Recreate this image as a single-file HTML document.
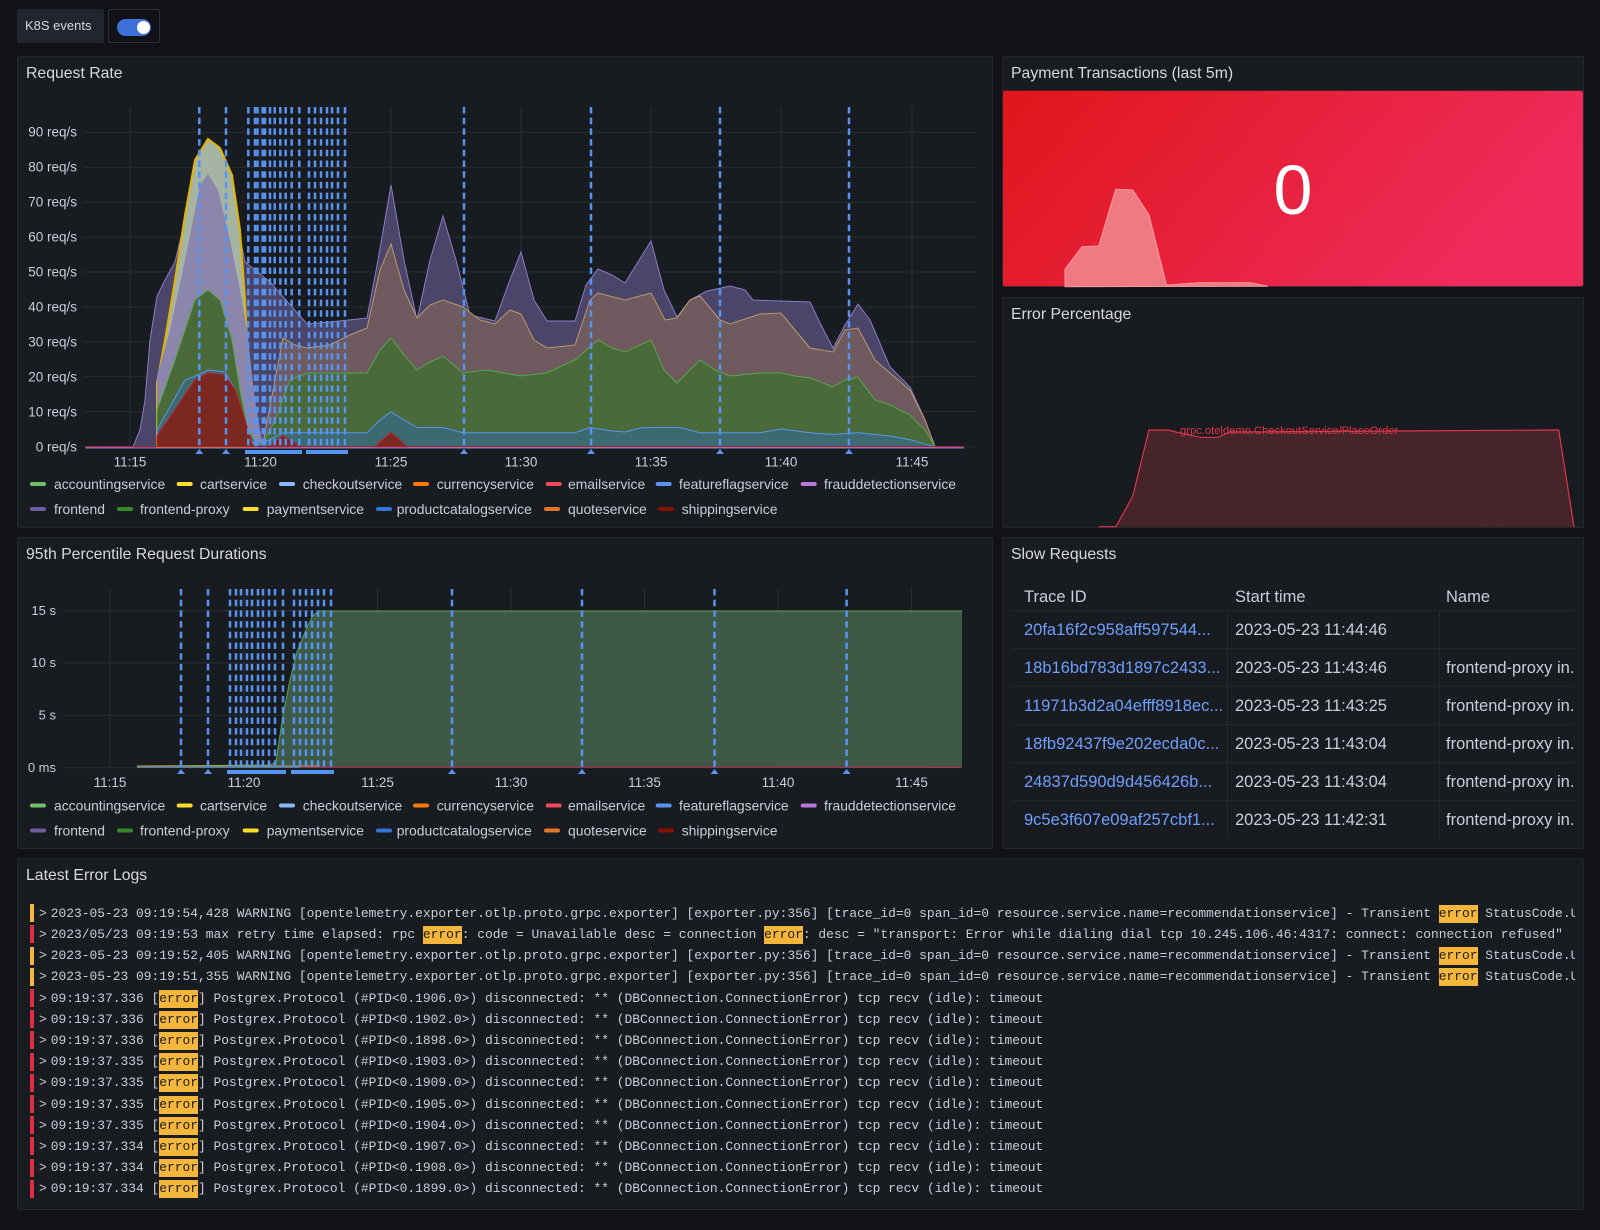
<!DOCTYPE html>
<html><head><meta charset="utf-8">
<style>
*{box-sizing:border-box;margin:0;padding:0}
body{width:1600px;height:1230px;background:#111217;position:relative;overflow:hidden;font-family:"Liberation Sans",sans-serif;color:#ccccdc}
.p{position:absolute;background:#181b1f;border:1px solid #24272e;border-radius:2px}
.t{position:absolute;font-size:15.8px;color:#d8d9e0;white-space:nowrap}
.a{position:absolute;white-space:nowrap}
.th,.td{position:absolute;font-size:16.5px;white-space:nowrap;line-height:18px}
.lk{color:#6e9fff}
.log{position:absolute;left:30px;width:1545px;overflow:hidden;height:21.2px;line-height:21.2px;font-family:"Liberation Mono",monospace;font-size:12.93px;color:#ccccdc;white-space:pre}
.log i{position:absolute;left:0;top:1.6px;width:4px;height:18px}
.log b{font-weight:normal;position:absolute;left:9px}
.log s{text-decoration:none;background:#f5b73b;color:#1b1c20;display:inline-block;line-height:18px}
</style></head><body>
<div class="a" style="left:17px;top:9px;width:87px;height:34px;background:#22252b;border-radius:2px;font-size:13px;line-height:34px;padding-left:8px;color:#d8d9e0">K8S events</div>
<div class="a" style="left:108px;top:9px;width:52px;height:34px;border:1px solid #2c3037;border-radius:2px;background:#111217"></div>
<div class="a" style="left:117px;top:19px;width:34px;height:17px;border-radius:9px;background:#3d71d9"></div>
<div class="a" style="left:137px;top:21px;width:13px;height:13px;border-radius:50%;background:#fff"></div>

<div class="p" style="left:17px;top:56px;width:976px;height:472px"></div>
<div class="p" style="left:1002px;top:56px;width:582px;height:231px"></div>
<div class="p" style="left:1002px;top:297px;width:582px;height:231px"></div>
<div class="p" style="left:17px;top:537px;width:976px;height:312px"></div>
<div class="p" style="left:1002px;top:537px;width:582px;height:312px"></div>
<div class="p" style="left:17px;top:858px;width:1567px;height:352px"></div>

<svg class="a" style="left:0;top:0" width="1600" height="1230" xmlns="http://www.w3.org/2000/svg">
<defs>
<linearGradient id="rg" x1="0" y1="0" x2="1" y2="0.3">
<stop offset="0" stop-color="#e0161a"/><stop offset="1" stop-color="#ee2b5c"/></linearGradient>
</defs>
<rect x="1003" y="90.7" width="580" height="195.5" fill="url(#rg)" rx="2"/>
<polygon points="1065,286.7 1065,269.3 1082,246.7 1098.7,246 1115.6,189.3 1132.8,190 1149,215 1166.5,285 1199,282.7 1250.7,282.7 1268,286.2" fill="#f07a82" stroke="#f59aa0" stroke-width="1"/>
<text x="1293" y="214" font-family="Liberation Sans" font-size="70" fill="#fff" text-anchor="middle">0</text>

<polygon points="1098.7,526.7 1116,526.7 1132.8,496 1149,430 1168,430 1180,433 1201,437.3 1218,437.3 1229.6,432 1558.7,430 1574,527" fill="#45242a"/>
<polyline points="1098.7,526.7 1116,526.7 1132.8,496 1149,430 1168,430 1180,433 1201,437.3 1218,437.3 1229.6,432 1558.7,430 1574,527" fill="none" stroke="#e0354a" stroke-width="1.2"/>
<text x="1180" y="434" font-family="Liberation Sans" font-size="11.2" fill="#e0354a">grpc.oteldemo.CheckoutService/PlaceOrder</text>

<g stroke="#2a2d33" stroke-width="1">
<line x1="83" x2="976" y1="446.7" y2="446.7"/><line x1="83" x2="976" y1="411.8" y2="411.8"/><line x1="83" x2="976" y1="376.8" y2="376.8"/><line x1="83" x2="976" y1="341.9" y2="341.9"/><line x1="83" x2="976" y1="307" y2="307"/><line x1="83" x2="976" y1="272" y2="272"/><line x1="83" x2="976" y1="237.1" y2="237.1"/><line x1="83" x2="976" y1="202.2" y2="202.2"/><line x1="83" x2="976" y1="167.3" y2="167.3"/><line x1="83" x2="976" y1="132.3" y2="132.3"/>
<line x1="130" x2="130" y1="107" y2="447"/><line x1="260.5" x2="260.5" y1="107" y2="447"/><line x1="391" x2="391" y1="107" y2="447"/><line x1="521" x2="521" y1="107" y2="447"/><line x1="651" x2="651" y1="107" y2="447"/><line x1="781" x2="781" y1="107" y2="447"/><line x1="912" x2="912" y1="107" y2="447"/>
</g>
<g font-family="Liberation Sans" font-size="13.5" fill="#ccccdc" text-anchor="end">
<text x="77" y="451.5">0 req/s</text><text x="77" y="416.5">10 req/s</text><text x="77" y="381.5">20 req/s</text><text x="77" y="346.5">30 req/s</text><text x="77" y="311.5">40 req/s</text><text x="77" y="276.5">50 req/s</text><text x="77" y="241.5">60 req/s</text><text x="77" y="206.5">70 req/s</text><text x="77" y="171.5">80 req/s</text><text x="77" y="136.5">90 req/s</text>
</g>
<g font-family="Liberation Sans" font-size="13.5" fill="#ccccdc" text-anchor="middle">
<text x="130" y="466.5">11:15</text><text x="260.5" y="466.5">11:20</text><text x="391" y="466.5">11:25</text><text x="521" y="466.5">11:30</text><text x="651" y="466.5">11:35</text><text x="781" y="466.5">11:40</text><text x="912" y="466.5">11:45</text>
</g>
<polygon points="86,446.7 133,446.7 140,430 145,400 150,340 157,296 165,280 175,262 185,220 195,165 208,139 220,150 232,180 240,237 245,262 270,282 307,324 330,322 367,318 378,260 391,185 404,260 417,320 430,260 443,216 456,260 470,315 495,321 508,285 521,252 534,300 547,321 575,321 586,285 598,269 612,275 625,283 638,262 651,241 664,290 677,317 690,300 707,291 730,286 745,290 753,300 810,302 821,325 833,348 845,325 858,304 870,320 890,367 910,387 925,420 935,446.7 963,446.7 963,448 86,448" fill="#4b4569" stroke="#8a7cc8" stroke-width="1"/>
<polygon points="157,446.7 157,383 165,340 175,280 185,215 195,160 208,139 220,148 232,175 240,230 245,300 250,400 256,446.7" fill="#a6b4a4" stroke="#e0b400" stroke-width="2"/>
<polygon points="157,446.7 157,376 170,330 185,260 200,185 208,174 218,190 230,240 240,290 247,330 255,400 263,446.7" fill="#8c86ad"/>
<polygon points="245,446.7 255,440 263,443 275,380 283,338 295,345 307,348 330,345 350,335 367,328 380,270 391,244 404,290 417,318 430,305 443,300 463,307 480,320 495,324 510,310 521,314 534,340 547,348 575,345 590,300 598,293 625,300 651,293 665,320 677,318 690,300 700,296 720,320 730,324 760,314 781,313 795,330 810,348 833,352 845,330 858,328 875,360 890,373 910,390 925,420 935,446.7" fill="#6f5a60" stroke="#b89a6a" stroke-width="1"/>
<polygon points="157,446.7 157,410 175,360 195,300 208,290 220,300 232,340 240,390 248,430 258,446 263,443 275,420 290,380 307,373 367,373 380,350 391,338 404,355 417,370 430,362 443,356 463,373 487,370 520,376 547,373 575,360 598,340 612,348 625,352 640,345 651,340 664,370 677,383 690,370 700,360 715,370 730,376 760,373 781,373 795,376 810,378 833,387 845,380 858,377 875,400 890,405 910,415 925,430 935,446.7" fill="#4a6a3a" stroke="#56a64b" stroke-width="1"/>
<polygon points="157,446.7 157,430 185,380 200,374 208,370 225,372 235,390 245,430 255,446 263,443 283,432.7 367,432.7 380,420 391,411.8 404,420 417,427.5 443,427.5 463,432.7 575,432.7 590,427.5 612,431 625,432 640,428 651,427.5 680,427.5 700,432.7 760,432.7 781,429 810,432.7 833,434.5 858,432.7 890,436 910,439.7 935,446.7" fill="#3d6a70" stroke="#5794f2" stroke-width="1"/>
<polygon points="157,446.7 157,436 175,410 195,380 208,373 225,375 235,390 245,420 253,446.7" fill="#7a2820" stroke="#c4162a" stroke-width="1"/>
<polygon points="268,446.7 283,436 300,446.7" fill="#7a2820" stroke="#c4162a"/>
<polygon points="375,446.7 391,432.7 407,446.7" fill="#7a2820" stroke="#c4162a"/>
<line x1="86" x2="963" y1="446.5" y2="446.5" stroke="#c4162a" stroke-width="1"/>
<g stroke="#5794f2" stroke-width="2.5" stroke-dasharray="6.5 4.2">
<line x1="199.3" x2="199.3" y1="107" y2="446"/><line x1="226" x2="226" y1="107" y2="446"/><line x1="248.3" x2="248.3" y1="107" y2="446"/><line x1="255" x2="255" y1="107" y2="446"/><line x1="257.5" x2="257.5" y1="107" y2="446"/><line x1="262.7" x2="262.7" y1="107" y2="446"/><line x1="265" x2="265" y1="107" y2="446"/><line x1="270" x2="270" y1="107" y2="446"/><line x1="274.7" x2="274.7" y1="107" y2="446"/><line x1="280.3" x2="280.3" y1="107" y2="446"/><line x1="285.7" x2="285.7" y1="107" y2="446"/><line x1="291.7" x2="291.7" y1="107" y2="446"/><line x1="299.3" x2="299.3" y1="107" y2="446"/><line x1="309" x2="309" y1="107" y2="446"/><line x1="315" x2="315" y1="107" y2="446"/><line x1="321" x2="321" y1="107" y2="446"/><line x1="327" x2="327" y1="107" y2="446"/><line x1="332" x2="332" y1="107" y2="446"/><line x1="338" x2="338" y1="107" y2="446"/><line x1="345" x2="345" y1="107" y2="446"/><line x1="464" x2="464" y1="107" y2="446"/><line x1="591" x2="591" y1="107" y2="446"/><line x1="720" x2="720" y1="107" y2="446"/><line x1="849" x2="849" y1="107" y2="446"/>
</g>
<g fill="#5794f2">
<polygon points="199.3,449 195.3,454 203.3,454"/><polygon points="226,449 222,454 230,454"/><polygon points="464,449 460,454 468,454"/><polygon points="591,449 587,454 595,454"/><polygon points="720,449 716,454 724,454"/><polygon points="849,449 845,454 853,454"/>
<rect x="245" y="450" width="57" height="4"/><rect x="306" y="450" width="42" height="4"/>
</g>

<g stroke="#2a2d33" stroke-width="1">
<line x1="63" x2="962" y1="610.7" y2="610.7"/><line x1="63" x2="962" y1="663" y2="663"/><line x1="63" x2="962" y1="715.3" y2="715.3"/><line x1="63" x2="962" y1="767.7" y2="767.7"/>
<line x1="110" x2="110" y1="589" y2="768"/><line x1="244" x2="244" y1="589" y2="768"/><line x1="377.5" x2="377.5" y1="589" y2="768"/><line x1="511" x2="511" y1="589" y2="768"/><line x1="644.5" x2="644.5" y1="589" y2="768"/><line x1="778" x2="778" y1="589" y2="768"/><line x1="911.5" x2="911.5" y1="589" y2="768"/>
</g>
<g font-family="Liberation Sans" font-size="13" fill="#ccccdc" text-anchor="end">
<text x="56" y="615">15 s</text><text x="56" y="667">10 s</text><text x="56" y="719.5">5 s</text><text x="56" y="772">0 ms</text>
</g>
<g font-family="Liberation Sans" font-size="13.5" fill="#ccccdc" text-anchor="middle">
<text x="110" y="787">11:15</text><text x="244" y="787">11:20</text><text x="377.5" y="787">11:25</text><text x="511" y="787">11:30</text><text x="644.5" y="787">11:35</text><text x="778" y="787">11:40</text><text x="911.5" y="787">11:45</text>
</g>
<polygon points="137,767 137,766 270,765 276,762 283,715 290,680 297,652 305,632 312,617 318,611 962,611 962,767.7" fill="#3e5a47"/>
<polyline points="137,766 270,765 276,762 283,715 290,680 297,652 305,632 312,617 318,611 962,611" fill="none" stroke="#56a64b" stroke-width="1"/>
<line x1="137" x2="962" y1="767.3" y2="767.3" stroke="#5794f2" stroke-width="1"/>
<line x1="137" x2="320" y1="766" y2="766" stroke="#c8a020" stroke-width="1"/>
<line x1="300" x2="962" y1="767" y2="767" stroke="#c4162a" stroke-width="1"/>
<g stroke="#5794f2" stroke-width="2.5" stroke-dasharray="6.5 4.2">
<line x1="181" x2="181" y1="589" y2="767"/><line x1="208" x2="208" y1="589" y2="767"/><line x1="230" x2="230" y1="589" y2="767"/><line x1="236" x2="236" y1="589" y2="767"/><line x1="241" x2="241" y1="589" y2="767"/><line x1="247" x2="247" y1="589" y2="767"/><line x1="252" x2="252" y1="589" y2="767"/><line x1="258" x2="258" y1="589" y2="767"/><line x1="263" x2="263" y1="589" y2="767"/><line x1="269" x2="269" y1="589" y2="767"/><line x1="275" x2="275" y1="589" y2="767"/><line x1="283" x2="283" y1="589" y2="767"/><line x1="294" x2="294" y1="589" y2="767"/><line x1="300" x2="300" y1="589" y2="767"/><line x1="306" x2="306" y1="589" y2="767"/><line x1="312" x2="312" y1="589" y2="767"/><line x1="318" x2="318" y1="589" y2="767"/><line x1="324" x2="324" y1="589" y2="767"/><line x1="331" x2="331" y1="589" y2="767"/><line x1="452" x2="452" y1="589" y2="767"/><line x1="582" x2="582" y1="589" y2="767"/><line x1="714.5" x2="714.5" y1="589" y2="767"/><line x1="846.6" x2="846.6" y1="589" y2="767"/>
</g>
<g fill="#5794f2">
<polygon points="181,769 177,774 185,774"/><polygon points="208,769 204,774 212,774"/><polygon points="452,769 448,774 456,774"/><polygon points="582,769 578,774 586,774"/><polygon points="714.5,769 710.5,774 718.5,774"/><polygon points="846.6,769 842.6,774 850.6,774"/>
<rect x="227" y="770" width="59" height="4"/><rect x="291" y="770" width="43" height="4"/>
</g>

<g font-family="Liberation Sans" font-size="13.9" fill="#ccccdc">
<g id="lg1">
<rect x="30" y="482" width="16" height="4" rx="2" fill="#73bf69"/><text x="54" y="489">accountingservice</text>
<rect x="176.7" y="482" width="16" height="4" rx="2" fill="#fade2a"/><text x="200" y="489">cartservice</text>
<rect x="279" y="482" width="16" height="4" rx="2" fill="#8ab8ff"/><text x="302.7" y="489">checkoutservice</text>
<rect x="413" y="482" width="16" height="4" rx="2" fill="#ff780a"/><text x="436.7" y="489">currencyservice</text>
<rect x="545.7" y="482" width="16" height="4" rx="2" fill="#f2495c"/><text x="568" y="489">emailservice</text>
<rect x="655.7" y="482" width="16" height="4" rx="2" fill="#5794f2"/><text x="679" y="489">featureflagservice</text>
<rect x="800.7" y="482" width="16" height="4" rx="2" fill="#b877d9"/><text x="824" y="489">frauddetectionservice</text>
<rect x="30" y="507" width="16" height="4" rx="2" fill="#705da0"/><text x="54" y="514">frontend</text>
<rect x="117" y="507" width="16" height="4" rx="2" fill="#37872d"/><text x="140" y="514">frontend-proxy</text>
<rect x="242.7" y="507" width="16" height="4" rx="2" fill="#fade2a"/><text x="266.7" y="514">paymentservice</text>
<rect x="376" y="507" width="16" height="4" rx="2" fill="#3274d9"/><text x="396.7" y="514">productcatalogservice</text>
<rect x="544" y="507" width="16" height="4" rx="2" fill="#e0752d"/><text x="568" y="514">quoteservice</text>
<rect x="658" y="507" width="16" height="4" rx="2" fill="#890f02"/><text x="681.7" y="514">shippingservice</text>
</g>
<use href="#lg1" transform="translate(0,321.5)"/>
</g>
</svg>

<div class="t" style="left:26px;top:65px">Request Rate</div>
<div class="t" style="left:1011px;top:65px">Payment Transactions (last 5m)</div>
<div class="t" style="left:1011px;top:306px">Error Percentage</div>
<div class="t" style="left:26px;top:546px">95th Percentile Request Durations</div>
<div class="t" style="left:1011px;top:546px">Slow Requests</div>
<div class="t" style="left:26px;top:867px">Latest Error Logs</div>

<div class="a" style="left:1011px;top:610px;width:563px;height:1px;background:#24272e"></div>
<div class="a" style="left:1011px;top:648px;width:563px;height:1px;background:#24272e"></div>
<div class="a" style="left:1011px;top:686px;width:563px;height:1px;background:#24272e"></div>
<div class="a" style="left:1011px;top:724px;width:563px;height:1px;background:#24272e"></div>
<div class="a" style="left:1011px;top:762px;width:563px;height:1px;background:#24272e"></div>
<div class="a" style="left:1011px;top:800px;width:563px;height:1px;background:#24272e"></div>
<div class="a" style="left:1227px;top:611px;width:1px;height:227px;background:#24272e"></div>
<div class="a" style="left:1439px;top:611px;width:1px;height:227px;background:#24272e"></div>
<div class="th" style="left:1024px;top:588px">Trace ID</div>
<div class="th" style="left:1235px;top:588px">Start time</div>
<div class="th" style="left:1446px;top:588px">Name</div>
<div class="td lk" style="left:1024px;top:621px">20fa16f2c958aff597544...</div>
<div class="td" style="left:1235px;top:621px">2023-05-23 11:44:46</div>
<div class="td lk" style="left:1024px;top:659px">18b16bd783d1897c2433...</div>
<div class="td" style="left:1235px;top:659px">2023-05-23 11:43:46</div>
<div class="td" style="left:1446px;top:659px">frontend-proxy in.</div>
<div class="td lk" style="left:1024px;top:697px">11971b3d2a04efff8918ec...</div>
<div class="td" style="left:1235px;top:697px">2023-05-23 11:43:25</div>
<div class="td" style="left:1446px;top:697px">frontend-proxy in.</div>
<div class="td lk" style="left:1024px;top:735px">18fb92437f9e202ecda0c...</div>
<div class="td" style="left:1235px;top:735px">2023-05-23 11:43:04</div>
<div class="td" style="left:1446px;top:735px">frontend-proxy in.</div>
<div class="td lk" style="left:1024px;top:773px">24837d590d9d456426b...</div>
<div class="td" style="left:1235px;top:773px">2023-05-23 11:43:04</div>
<div class="td" style="left:1446px;top:773px">frontend-proxy in.</div>
<div class="td lk" style="left:1024px;top:811px">9c5e3f607e09af257cbf1...</div>
<div class="td" style="left:1235px;top:811px">2023-05-23 11:42:31</div>
<div class="td" style="left:1446px;top:811px">frontend-proxy in.</div>

<div class="log" style="top:902.7px"><i style="background:#f5b73b"></i><b>&gt;</b><span style="position:absolute;left:20.7px">2023-05-23 09:19:54,428 WARNING [opentelemetry.exporter.otlp.proto.grpc.exporter] [exporter.py:356] [trace_id=0 span_id=0 resource.service.name=recommendationservice] - Transient <s>error</s> StatusCode.UNAVAILABLE</span></div>
<div class="log" style="top:923.9px"><i style="background:#e02f44"></i><b>&gt;</b><span style="position:absolute;left:20.7px">2023/05/23 09:19:53 max retry time elapsed: rpc <s>error</s>: code = Unavailable desc = connection <s>error</s>: desc = "transport: Error while dialing dial tcp 10.245.106.46:4317: connect: connection refused"</span></div>
<div class="log" style="top:945.1px"><i style="background:#f5b73b"></i><b>&gt;</b><span style="position:absolute;left:20.7px">2023-05-23 09:19:52,405 WARNING [opentelemetry.exporter.otlp.proto.grpc.exporter] [exporter.py:356] [trace_id=0 span_id=0 resource.service.name=recommendationservice] - Transient <s>error</s> StatusCode.UNAVAILABLE</span></div>
<div class="log" style="top:966.3px"><i style="background:#f5b73b"></i><b>&gt;</b><span style="position:absolute;left:20.7px">2023-05-23 09:19:51,355 WARNING [opentelemetry.exporter.otlp.proto.grpc.exporter] [exporter.py:356] [trace_id=0 span_id=0 resource.service.name=recommendationservice] - Transient <s>error</s> StatusCode.UNAVAILABLE</span></div>
<div class="log" style="top:987.5px"><i style="background:#e02f44"></i><b>&gt;</b><span style="position:absolute;left:20.7px">09:19:37.336 [<s>error</s>] Postgrex.Protocol (#PID&lt;0.1906.0&gt;) disconnected: ** (DBConnection.ConnectionError) tcp recv (idle): timeout</span></div>
<div class="log" style="top:1008.7px"><i style="background:#e02f44"></i><b>&gt;</b><span style="position:absolute;left:20.7px">09:19:37.336 [<s>error</s>] Postgrex.Protocol (#PID&lt;0.1902.0&gt;) disconnected: ** (DBConnection.ConnectionError) tcp recv (idle): timeout</span></div>
<div class="log" style="top:1029.9px"><i style="background:#e02f44"></i><b>&gt;</b><span style="position:absolute;left:20.7px">09:19:37.336 [<s>error</s>] Postgrex.Protocol (#PID&lt;0.1898.0&gt;) disconnected: ** (DBConnection.ConnectionError) tcp recv (idle): timeout</span></div>
<div class="log" style="top:1051.1px"><i style="background:#e02f44"></i><b>&gt;</b><span style="position:absolute;left:20.7px">09:19:37.335 [<s>error</s>] Postgrex.Protocol (#PID&lt;0.1903.0&gt;) disconnected: ** (DBConnection.ConnectionError) tcp recv (idle): timeout</span></div>
<div class="log" style="top:1072.3px"><i style="background:#e02f44"></i><b>&gt;</b><span style="position:absolute;left:20.7px">09:19:37.335 [<s>error</s>] Postgrex.Protocol (#PID&lt;0.1909.0&gt;) disconnected: ** (DBConnection.ConnectionError) tcp recv (idle): timeout</span></div>
<div class="log" style="top:1093.5px"><i style="background:#e02f44"></i><b>&gt;</b><span style="position:absolute;left:20.7px">09:19:37.335 [<s>error</s>] Postgrex.Protocol (#PID&lt;0.1905.0&gt;) disconnected: ** (DBConnection.ConnectionError) tcp recv (idle): timeout</span></div>
<div class="log" style="top:1114.7px"><i style="background:#e02f44"></i><b>&gt;</b><span style="position:absolute;left:20.7px">09:19:37.335 [<s>error</s>] Postgrex.Protocol (#PID&lt;0.1904.0&gt;) disconnected: ** (DBConnection.ConnectionError) tcp recv (idle): timeout</span></div>
<div class="log" style="top:1135.9px"><i style="background:#e02f44"></i><b>&gt;</b><span style="position:absolute;left:20.7px">09:19:37.334 [<s>error</s>] Postgrex.Protocol (#PID&lt;0.1907.0&gt;) disconnected: ** (DBConnection.ConnectionError) tcp recv (idle): timeout</span></div>
<div class="log" style="top:1157.1px"><i style="background:#e02f44"></i><b>&gt;</b><span style="position:absolute;left:20.7px">09:19:37.334 [<s>error</s>] Postgrex.Protocol (#PID&lt;0.1908.0&gt;) disconnected: ** (DBConnection.ConnectionError) tcp recv (idle): timeout</span></div>
<div class="log" style="top:1178.3px"><i style="background:#e02f44"></i><b>&gt;</b><span style="position:absolute;left:20.7px">09:19:37.334 [<s>error</s>] Postgrex.Protocol (#PID&lt;0.1899.0&gt;) disconnected: ** (DBConnection.ConnectionError) tcp recv (idle): timeout</span></div>
</body></html>
